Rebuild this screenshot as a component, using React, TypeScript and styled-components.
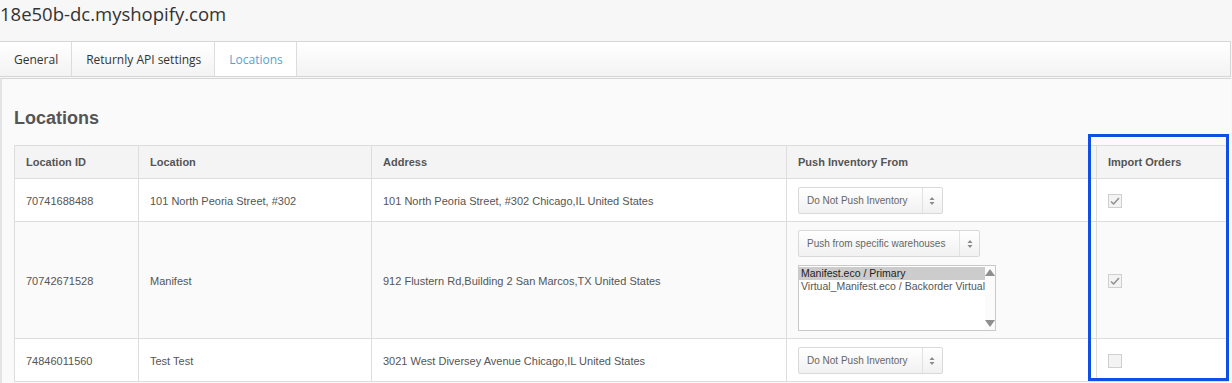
import React from 'react';
import styled, {createGlobalStyle} from "styled-components";

const GlobalStyle = createGlobalStyle`
  html, body {
    margin: 0;
    padding: 0;
    background: #f7f7f7;
  }
`

type Row = {
    id: string
    name: string
    address: string
    push: "none" | "specific"
    imported: boolean
}

const rows: Row[] = [
    {id: "70741688488", name: "101 North Peoria Street, #302", address: "101 North Peoria Street, #302 Chicago,IL United States", push: "none", imported: true},
    {id: "70742671528", name: "Manifest", address: "912 Flustern Rd,Building 2 San Marcos,TX United States", push: "specific", imported: true},
    {id: "74846011560", name: "Test Test", address: "3021 West Diversey Avenue Chicago,IL United States", push: "none", imported: false},
]

const tabs = ["General", "Returnly API settings", "Locations"]

const UpDown = () => (
    <svg width="6" height="10" viewBox="0 0 6 10">
        <path d="M3 1 L5.5 4 L0.5 4 Z" fill="#8a8a8a"/>
        <path d="M3 9 L5.5 6 L0.5 6 Z" fill="#8a8a8a"/>
    </svg>
)

const Check = () => (
    <svg width="12" height="12" viewBox="0 0 12 12">
        <path d="M2 6.5 L4.6 9 L10 3" fill="none" stroke="#8f8f8f" strokeWidth="1.5"/>
    </svg>
)

const SelectBox = ({label}: { label: string }) => (
    <StyledSelect>
        <SelectLabel>{label}</SelectLabel>
        <SelectArrow><UpDown/></SelectArrow>
    </StyledSelect>
)

const WarehouseList = () => (
    <ListBox>
        <ListOptions>
            <ListOption selected>Manifest.eco / Primary</ListOption>
            <ListOption>Virtual_Manifest.eco / Backorder Virtual</ListOption>
        </ListOptions>
        <ScrollTrack>
            <ScrollArrow dir="up"/>
            <ScrollArrow dir="down"/>
        </ScrollTrack>
    </ListBox>
)

export default function App() {
    return (
        <Page>
            <GlobalStyle/>
            <ShopTitle>18e50b-dc.myshopify.com</ShopTitle>
            <TabBar>
                {tabs.map(t => (
                    <Tab key={t} active={t === "Locations"}>{t}</Tab>
                ))}
            </TabBar>
            <Panel>
                <SectionTitle>Locations</SectionTitle>
                <TableWrap>
                    <Table>
                        <colgroup>
                            <col style={{width: 124}}/>
                            <col style={{width: 233}}/>
                            <col style={{width: 415}}/>
                            <col style={{width: 310}}/>
                            <col style={{width: 132}}/>
                        </colgroup>
                        <thead>
                        <tr>
                            <Th>Location ID</Th>
                            <Th>Location</Th>
                            <Th>Address</Th>
                            <Th>Push Inventory From</Th>
                            <Th>Import Orders</Th>
                        </tr>
                        </thead>
                        <tbody>
                        {rows.map((r, i) => (
                            <Tr key={r.id} striped={i % 2 === 1}>
                                <Td>{r.id}</Td>
                                <Td>{r.name}</Td>
                                <Td>{r.address}</Td>
                                <Td>
                                    {r.push === "none"
                                        ? <SelectBox label="Do Not Push Inventory"/>
                                        : <PushStack>
                                            <SelectBox label="Push from specific warehouses"/>
                                            <WarehouseList/>
                                        </PushStack>}
                                </Td>
                                <Td>
                                    <CheckBox>{r.imported && <Check/>}</CheckBox>
                                </Td>
                            </Tr>
                        ))}
                        </tbody>
                    </Table>
                    <Highlight/>
                </TableWrap>
            </Panel>
        </Page>
    );
}

const Page = styled.div`
  width: 1231px;
  height: 383px;
  overflow: hidden;
  background: #f7f7f7;
`

const ShopTitle = styled.h1`
  margin: 0;
  height: 41px;
  padding-top: 0;
  box-sizing: border-box;
  font-family: "Open Sans", sans-serif;
  font-weight: 400;
  font-size: 18.5px;
  line-height: 28px;
  color: #333;
`

const TabBar = styled.div`
  display: flex;
  height: 36px;
  box-sizing: border-box;
  border: 1px solid #d6d6d6;
  border-left: none;
  background: linear-gradient(#ffffff, #f3f3f3);
`

const Tab = styled.div<{ active?: boolean }>`
  padding: 1px 13px 0 14px;
  border-right: 1px solid #dcdcdc;
  font-family: "Open Sans", sans-serif;
  font-size: 12px;
  line-height: 33px;
  color: ${p => p.active ? "#57a3d0" : "#333"};
  background: ${p => p.active ? "#fff" : "transparent"};
`

const Panel = styled.div`
  margin-top: 1px;
  border-top: 1px solid #d6d6d6;
  border-left: 2px solid #e4e4e4;
  background: #fafafa;
  padding: 0 0 20px 12px;
`

const SectionTitle = styled.h2`
  margin: 0;
  padding-top: 28px;
  height: 66px;
  box-sizing: border-box;
  font-family: "Liberation Sans", Arial, sans-serif;
  font-weight: 700;
  font-size: 18px;
  line-height: 22px;
  color: #555;
`

const TableWrap = styled.div`
  position: relative;
  width: 1214px;
`

const Table = styled.table`
  width: 1214px;
  table-layout: fixed;
  border-collapse: collapse;
  font-family: "Liberation Sans", Arial, sans-serif;
  font-size: 11px;
  color: #555;
`

const Th = styled.th`
  height: 32px;
  padding: 0 11px;
  border: 1px solid #dddddd;
  background: #f4f4f4;
  text-align: left;
  font-weight: 700;
`

const Tr = styled.tr<{ striped?: boolean }>`
  background: ${p => p.striped ? "#fafafa" : "#fff"};
`

const Td = styled.td`
  height: 25px;
  padding: 8px 11px 7px;
  border: 1px solid #dddddd;
  vertical-align: middle;
`

const StyledSelect = styled.div`
  display: flex;
  align-items: stretch;
  width: max-content;
  height: 27px;
  box-sizing: border-box;
  border: 1px solid #d9d9d9;
  border-radius: 2px;
  background: linear-gradient(#ffffff, #f1f1f1);
  font-size: 10px;
  color: #666;
`

const SelectLabel = styled.span`
  display: flex;
  align-items: center;
  padding: 0 14px 0 8px;
`

const SelectArrow = styled.span`
  display: flex;
  align-items: center;
  justify-content: center;
  width: 19px;
  border-left: 1px solid #e2e2e2;
`

const PushStack = styled.div`
  display: flex;
  flex-direction: column;
  gap: 8px;
`

const ListBox = styled.div`
  display: flex;
  width: 198px;
  height: 66px;
  box-sizing: border-box;
  border: 1px solid #c9c9c9;
  background: #fff;
`

const ListOptions = styled.div`
  flex: 1;
  padding-top: 1px;
`

const ListOption = styled.div<{ selected?: boolean }>`
  height: 13px;
  line-height: 13px;
  padding-left: 2px;
  font-size: 10.5px;
  white-space: nowrap;
  color: ${p => p.selected ? "#222" : "#555"};
  background: ${p => p.selected ? "#cccccc" : "transparent"};
`

const ScrollTrack = styled.div`
  width: 16px;
  display: flex;
  flex-direction: column;
  justify-content: space-between;
  align-items: center;
  padding: 3px 0;
  background: #fbfbfb;
`

const ScrollArrow = styled.span<{ dir: "up" | "down" }>`
  width: 0;
  height: 0;
  border-left: 5px solid transparent;
  border-right: 5px solid transparent;
  ${p => p.dir === "up"
    ? "border-bottom: 7px solid #8f8f8f;"
    : "border-top: 7px solid #8f8f8f;"}
`

const CheckBox = styled.span`
  display: flex;
  align-items: center;
  justify-content: center;
  width: 14px;
  height: 14px;
  box-sizing: border-box;
  border: 1px solid #cfcfcf;
  background: #f3f3f3;
`

const Highlight = styled.div`
  position: absolute;
  left: 1074px;
  top: -11px;
  width: 141px;
  height: 247px;
  box-sizing: border-box;
  border: 3px solid #0f4fe3;
  pointer-events: none;
`
